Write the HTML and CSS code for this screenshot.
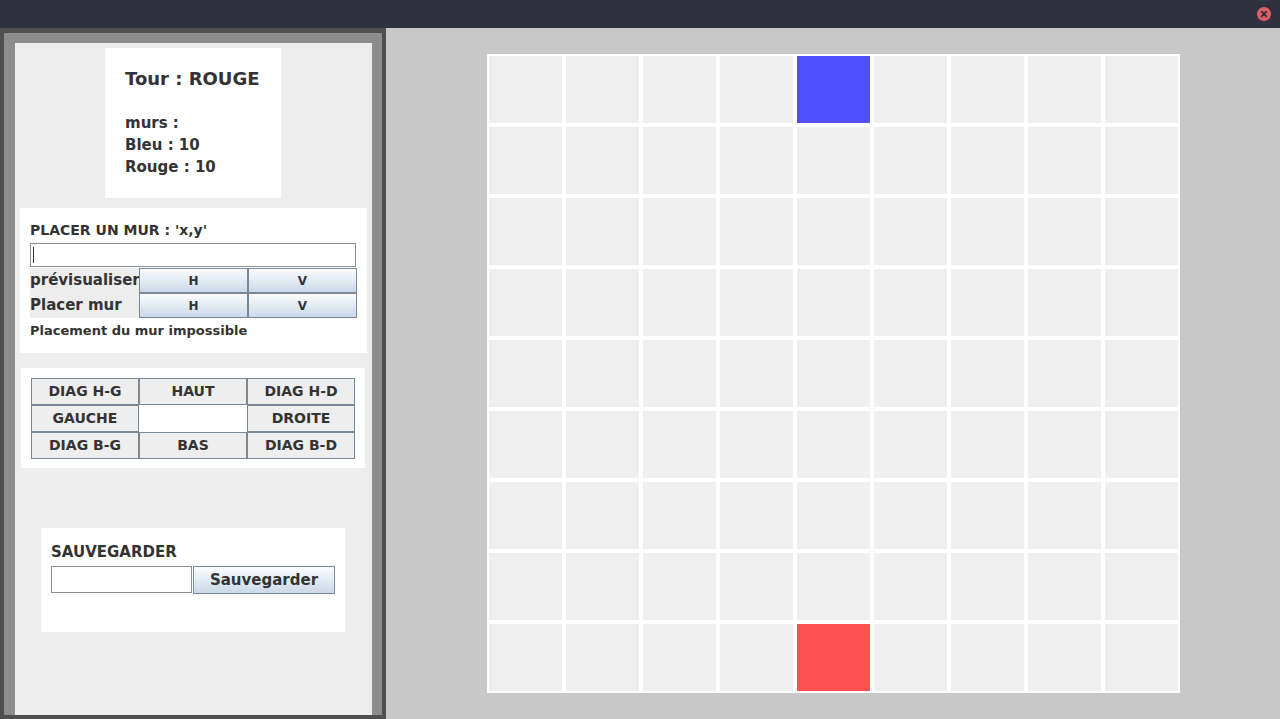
FILE: index.html
```html
<!DOCTYPE html>
<html lang="fr">
<head>
<meta charset="utf-8">
<title>Jeu</title>
<link rel="stylesheet" href="styles.css">
</head>
<body>
<div class="window">
  <div class="titlebar">
    <span class="close">
      <svg width="14" height="14" viewBox="0 0 14 14"><circle cx="7" cy="7" r="7" fill="#d9606a"/><path d="M4.6 4.6 L9.4 9.4 M9.4 4.6 L4.6 9.4" stroke="#3b2a30" stroke-width="1.8" stroke-linecap="round"/></svg>
    </span>
  </div>
  <div class="main">
    <div class="side">
      <div class="side-inner">
        <div class="panel">
          <div class="info">
            <div class="turn">Tour : ROUGE</div>
            <div class="blank"></div>
            <div class="line">murs :</div>
            <div class="line">Bleu : 10</div>
            <div class="line">Rouge : 10</div>
          </div>

          <div class="wall">
            <div class="wall-title">PLACER UN MUR : 'x,y'</div>
            <div class="field wall-field"><span class="caret"></span></div>
            <div class="wall-grid">
              <div class="wlabel">prévisualiser</div>
              <div class="gbtn">H</div>
              <div class="gbtn">V</div>
              <div class="wlabel">Placer mur</div>
              <div class="gbtn">H</div>
              <div class="gbtn">V</div>
            </div>
            <div class="wall-msg">Placement du mur impossible</div>
          </div>

          <div class="dirs">
            <div class="dir-grid">
              <div class="dbtn">DIAG H-G</div>
              <div class="dbtn">HAUT</div>
              <div class="dbtn">DIAG H-D</div>
              <div class="dbtn">GAUCHE</div>
              <div class="dempty"></div>
              <div class="dbtn">DROITE</div>
              <div class="dbtn">DIAG B-G</div>
              <div class="dbtn">BAS</div>
              <div class="dbtn">DIAG B-D</div>
            </div>
          </div>

          <div class="save">
            <div class="save-title">SAUVEGARDER</div>
            <div class="save-row">
              <div class="field save-field"></div>
              <div class="gbtn save-btn">Sauvegarder</div>
            </div>
          </div>
        </div>
      </div>
    </div>
    <div class="board-area">
      <div class="board">
        <div class="cell"></div><div class="cell"></div><div class="cell"></div><div class="cell"></div><div class="cell blue"></div><div class="cell"></div><div class="cell"></div><div class="cell"></div><div class="cell"></div>
        <div class="cell"></div><div class="cell"></div><div class="cell"></div><div class="cell"></div><div class="cell"></div><div class="cell"></div><div class="cell"></div><div class="cell"></div><div class="cell"></div>
        <div class="cell"></div><div class="cell"></div><div class="cell"></div><div class="cell"></div><div class="cell"></div><div class="cell"></div><div class="cell"></div><div class="cell"></div><div class="cell"></div>
        <div class="cell"></div><div class="cell"></div><div class="cell"></div><div class="cell"></div><div class="cell"></div><div class="cell"></div><div class="cell"></div><div class="cell"></div><div class="cell"></div>
        <div class="cell"></div><div class="cell"></div><div class="cell"></div><div class="cell"></div><div class="cell"></div><div class="cell"></div><div class="cell"></div><div class="cell"></div><div class="cell"></div>
        <div class="cell"></div><div class="cell"></div><div class="cell"></div><div class="cell"></div><div class="cell"></div><div class="cell"></div><div class="cell"></div><div class="cell"></div><div class="cell"></div>
        <div class="cell"></div><div class="cell"></div><div class="cell"></div><div class="cell"></div><div class="cell"></div><div class="cell"></div><div class="cell"></div><div class="cell"></div><div class="cell"></div>
        <div class="cell"></div><div class="cell"></div><div class="cell"></div><div class="cell"></div><div class="cell"></div><div class="cell"></div><div class="cell"></div><div class="cell"></div><div class="cell"></div>
        <div class="cell"></div><div class="cell"></div><div class="cell"></div><div class="cell"></div><div class="cell red"></div><div class="cell"></div><div class="cell"></div><div class="cell"></div><div class="cell"></div>
      </div>
    </div>
  </div>
</div>
</body>
</html>
```

FILE: styles.css
```css
* { box-sizing: border-box; }
html, body {
  margin: 0;
  padding: 0;
  width: 1280px;
  height: 719px;
  overflow: hidden;
  font-family: "DejaVu Sans", "Liberation Sans", sans-serif;
  color: #333333;
}
.window {
  display: flex;
  flex-direction: column;
  width: 1280px;
  height: 719px;
}
.titlebar {
  height: 28px;
  flex: 0 0 28px;
  background: #2f323c;
  display: flex;
  align-items: center;
  justify-content: flex-end;
  padding-right: 9px;
}
.close {
  display: flex;
  width: 14px;
  height: 14px;
}
.main {
  flex: 1;
  display: flex;
  min-height: 0;
}
.side {
  width: 386px;
  flex: 0 0 386px;
  background: #4f4f4f;
  padding: 5px 4px 4px 4px;
  display: flex;
}
.side-inner {
  flex: 1;
  background: #8c8c8c;
  padding: 10px 10px 0 11px;
  display: flex;
}
.panel {
  flex: 1;
  background: #ededed;
  display: flex;
  flex-direction: column;
  align-items: center;
  font-weight: bold;
}

/* info box */
.info {
  margin-top: 5px;
  margin-right: 1px;
  width: 176px;
  height: 150px;
  background: #ffffff;
  padding: 20px 0 20px 20px;
  white-space: nowrap;
}
.turn { font-size: 18px; line-height: 22px; }
.blank { height: 22px; }
.line { font-size: 15px; line-height: 22px; }

/* wall box */
.wall {
  margin-top: 10px;
  align-self: stretch;
  margin-left: 5px;
  margin-right: 5px;
  height: 145px;
  background: #ffffff;
  padding: 14px 10px 0 10px;
}
.wall-title {
  font-size: 14px;
  line-height: 17px;
}
.field {
  background: #ffffff;
  border: 1px solid #8a9098;
  position: relative;
}
.wall-field {
  margin-top: 4px;
  width: 326px;
  height: 24px;
}
.caret {
  position: absolute;
  left: 2px;
  top: 3px;
  width: 1px;
  height: 16px;
  background: #333333;
}
.wall-grid {
  margin-top: 1px;
  width: 327px;
  display: grid;
  grid-template-columns: 109px 109px 109px;
  grid-template-rows: 25px 25px;
  background: #ededed;
}
.wlabel {
  font-size: 15px;
  line-height: 25px;
  overflow: hidden;
  white-space: nowrap;
}
.gbtn {
  border: 1px solid #7a8794;
  background: linear-gradient(to bottom, #fbfcfe 0%, #e3ebf4 50%, #c9d8e8 100%);
  display: flex;
  align-items: center;
  justify-content: center;
  font-size: 12px;
  color: #333333;
}
.wall-msg {
  margin-top: 4px;
  font-size: 13px;
  line-height: 17px;
}

/* directions */
.dirs {
  margin-top: 15px;
  width: 344px;
  margin-right: 1px;
  background: #ffffff;
  padding: 10px 10px 0 10px;
  height: 100px;
}
.dir-grid {
  display: grid;
  grid-template-columns: 108px 108px 108px;
  grid-template-rows: 27px 27px 27px;
}
.dbtn {
  border: 1px solid #7a8794;
  background: #eeeeee;
  display: flex;
  align-items: center;
  justify-content: center;
  font-size: 14px;
  white-space: nowrap;
  padding-bottom: 1px;
}
.dempty { background: #ffffff; }

/* save */
.save {
  margin-top: 60px;
  margin-right: 1px;
  width: 304px;
  height: 104px;
  background: #ffffff;
  padding: 15px 10px 0 10px;
}
.save-title {
  font-size: 15px;
  line-height: 18px;
}
.save-row {
  margin-top: 5px;
  display: flex;
  align-items: flex-start;
}
.save-field {
  width: 141px;
  height: 27px;
}
.save-btn {
  margin-left: 1px;
  width: 142px;
  height: 28px;
  font-size: 15px;
}

/* board */
.board-area {
  flex: 1;
  background: #c8c8c8;
  display: flex;
  align-items: center;
  justify-content: center;
}
.board {
  background: #ffffff;
  padding: 2px;
  display: grid;
  grid-template-columns: repeat(9, 73px);
  grid-template-rows: repeat(9, 67px);
  gap: 4px;
}
.cell { background: #efefef; }
.cell.blue { background: #5050ff; }
.cell.red { background: #ff5050; }
```
